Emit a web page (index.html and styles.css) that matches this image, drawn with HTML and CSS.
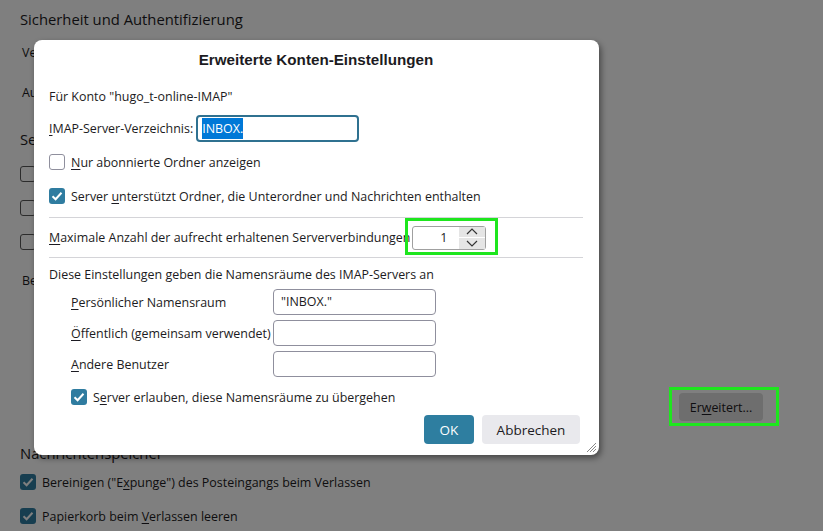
FILE: index.html
```html
<!DOCTYPE html>
<html lang="de">
<head>
    <meta charset="UTF-8">
    <title>Kontoeinstellungen</title>
    <link rel="stylesheet" href="styles.css">
</head>
<body>
    <div class="page">
        <h2 class="section-title first">Sicherheit und Authentifizierung</h2>
        <div class="field-row row-conn">Verbindungssicherheit:</div>
        <div class="field-row row-auth">Authentifizierungsmethode:</div>

        <h2 class="section-title server">Server-Einstellungen</h2>
        <label class="check-row first-check"><span class="box"></span><span>Beim Starten auf neue Nachrichten prüfen</span></label>
        <label class="check-row"><span class="box"></span><span>Alle 10 Minuten auf neue Nachrichten prüfen</span></label>
        <label class="check-row"><span class="box"></span><span>Sofortige Benachrichtigung über neue Nachrichten</span></label>
        <div class="field-row row-delete">Beim Löschen einer Nachricht:</div>

        <div class="advanced-row">
            <button class="btn-plain">Er<u>w</u>eitert...</button>
        </div>

        <h2 class="section-title store">Nachrichtenspeicher</h2>
        <label class="check-row"><span class="box checked"></span><span>Bereinigen ("E<u>x</u>punge") des Posteingangs beim Verlassen</span></label>
        <label class="check-row"><span class="box checked"></span><span>Papierkorb beim <u>V</u>erlassen leeren</span></label>
    </div>

    <div class="dim"></div>
    <div class="mark mark-advanced"></div>

    <div class="dialog">
        <h1 class="dialog-title">Erweiterte Konten-Einstellungen</h1>
        <p class="account">Für Konto "hugo_t-online-IMAP"</p>

        <div class="dir-row">
            <span><u>I</u>MAP-Server-Verzeichnis:</span>
            <div class="text-input focused"><span class="selection">INBOX.</span></div>
        </div>

        <label class="check-row"><span class="box"></span><span><u>N</u>ur abonnierte Ordner anzeigen</span></label>
        <label class="check-row"><span class="box checked"></span><span>Server <u>u</u>nterstützt Ordner, die Unterordner und Nachrichten enthalten</span></label>

        <div class="conn-row">
            <span><u>M</u>aximale Anzahl der aufrecht erhaltenen Serververbindungen</span>
            <div class="spinner">
                <span class="spin-value">1</span>
                <div class="spin-buttons">
                    <span class="spin-btn"><svg width="12" height="7" viewBox="0 0 12 7"><path d="M1 6 L6 1 L11 6" fill="none" stroke="#333" stroke-width="1.2"/></svg></span>
                    <span class="spin-btn"><svg width="12" height="7" viewBox="0 0 12 7"><path d="M1 1 L6 6 L11 1" fill="none" stroke="#333" stroke-width="1.2"/></svg></span>
                </div>
                <div class="mark mark-spinner"></div>
            </div>
        </div>

        <p class="ns-intro">Diese Einstellungen geben die Namensräume des IMAP-Servers an</p>
        <div class="ns-grid">
            <span><u>P</u>ersönlicher Namensraum</span>
            <div class="text-input">"INBOX."</div>
            <span><u>Ö</u>ffentlich (gemeinsam verwendet)</span>
            <div class="text-input"></div>
            <span><u>A</u>ndere Benutzer</span>
            <div class="text-input"></div>
        </div>
        <label class="check-row ns-override"><span class="box checked"></span><span>S<u>e</u>rver erlauben, diese Namensräume zu übergehen</span></label>

        <div class="dialog-buttons">
            <button class="btn-primary">OK</button>
            <button class="btn-secondary">Abbrechen</button>
        </div>

        <svg class="grip" width="12" height="12" viewBox="0 0 12 12">
            <path d="M11 2 L2 11 M11 5 L5 11 M11 8 L8 11" stroke="#888" stroke-width="1"/>
        </svg>
    </div>
</body>
</html>
```

FILE: styles.css
```css
* { box-sizing: border-box; }
html, body { margin: 0; padding: 0; }
body {
    width: 823px;
    height: 531px;
    overflow: hidden;
    background: #fff;
    font-family: "Open Sans", "Noto Sans", sans-serif;
    font-size: 12.45px;
    color: #1c1b22;
    position: relative;
}
u { text-decoration-thickness: 1px; text-underline-offset: 2px; }

/* settings page behind the dialog */
.page {
    padding: 0 0 0 20px;
    display: flex;
    flex-direction: column;
    white-space: nowrap;
}
.section-title {
    font-size: 14.8px;
    font-weight: 400;
    margin: 0;
    height: 24px;
    line-height: 24px;
}
.section-title.first { margin-top: 7px; }
.section-title.server { margin-top: 14px; }
.section-title.store { margin-top: 20px; }
.field-row {
    height: 40px;
    line-height: 40px;
    padding-left: 2px;
}
.row-conn { margin-top: 2px; }
.row-delete { margin-top: 2px; }
.page .check-row { height: 34px; }
.page .first-check { margin-top: 6px; }
.advanced-row {
    display: flex;
    justify-content: flex-end;
    padding-right: 60px;
    margin-top: 92px;
}
.btn-plain {
    width: 84px;
    height: 28px;
    border: none;
    border-radius: 4px;
    background: #dcdcdc;
    font: inherit;
    color: #1c1b22;
}

.check-row {
    display: flex;
    align-items: center;
    gap: 6px;
    white-space: nowrap;
}
.box {
    width: 16px;
    height: 16px;
    border: 1.5px solid #8f8f9d;
    border-radius: 3px;
    flex: none;
    background: #fff;
}
.box.checked {
    border: none;
    background: #2f7ca0 url("data:image/svg+xml,%3Csvg xmlns='http://www.w3.org/2000/svg' viewBox='0 0 16 16'%3E%3Cpath d='M3.5 8.2 L6.6 11.2 L12.5 4.8' fill='none' stroke='white' stroke-width='2'/%3E%3C/svg%3E") center / 16px 16px no-repeat;
}
.page .box { border-color: #595959; }

.dim {
    position: absolute;
    inset: 0;
    background: rgba(0, 0, 0, 0.5);
}
.mark {
    position: absolute;
    border: 3px solid #1ee61e;
}
.mark-advanced {
    left: 669px;
    top: 387px;
    width: 110px;
    height: 39px;
}

/* modal dialog */
.dialog {
    position: absolute;
    left: 34px;
    top: 40px;
    width: 565px;
    height: 415px;
    background: #fff;
    border-radius: 8px;
    box-shadow: 2px 3px 6px rgba(0, 0, 0, 0.45);
    padding: 0 16px 0 15px;
    display: flex;
    flex-direction: column;
    white-space: nowrap;
}
.dialog-title {
    margin: 11px 0 0;
    font-family: "Liberation Sans", Arial, sans-serif;
    font-size: 15.2px;
    font-weight: 700;
    text-align: center;
    line-height: 18px;
}
.account {
    margin: 18px 0 0;
    line-height: 20px;
}
.dir-row {
    display: flex;
    align-items: center;
    gap: 3px;
    margin-top: 8px;
}
.text-input {
    width: 163px;
    height: 26px;
    border: 1px solid #8f8f9d;
    border-radius: 4px;
    padding: 0 7px;
    line-height: 24px;
}
.text-input.focused {
    height: 27px;
    border: 2px solid #2f7190;
    padding: 0 4px;
    line-height: 23px;
}
.selection {
    background: #0078d7;
    color: #fff;
    padding: 2px 0;
}
.dialog > .check-row { height: 34px; }
.dialog .dir-row + .check-row { margin-top: 3px; }

.conn-row {
    display: flex;
    align-items: center;
    gap: 2px;
    border-top: 1px solid #d4d4d8;
    border-bottom: 1px solid #d4d4d8;
    height: 41px;
    margin-top: 4px;
}
.spinner {
    position: relative;
    width: 74px;
    height: 24px;
    border: 1px solid #a0a0a0;
    border-radius: 3px;
    display: flex;
}
.spin-value {
    flex: 1;
    text-align: right;
    padding-right: 12px;
    line-height: 22px;
}
.spin-buttons {
    width: 26px;
    display: flex;
    flex-direction: column;
    gap: 1px;
    background: #fff;
}
.spin-btn {
    flex: 1;
    background: #e5e5e5;
    display: flex;
    align-items: center;
    justify-content: center;
}
.mark-spinner {
    left: -8px;
    top: -9px;
    width: 93px;
    height: 37px;
}

.ns-intro {
    margin: 7px 0 0;
    line-height: 20px;
}
.ns-grid {
    display: grid;
    grid-template-columns: 202px 163px;
    row-gap: 5px;
    align-items: center;
    margin: 4px 0 0 22px;
}
.check-row.ns-override {
    margin-left: 22px;
    height: 32px;
    margin-top: 4px;
}

.dialog-buttons {
    display: flex;
    justify-content: flex-end;
    gap: 8px;
    margin-top: 2px;
    padding-right: 3px;
}
.dialog-buttons button {
    height: 29px;
    border: none;
    border-radius: 4px;
    font: inherit;
    font-size: 13.5px;
}
.btn-primary {
    width: 50px;
    background: #2e7ea0;
    color: #fff;
}
.btn-secondary {
    width: 98px;
    background: #e9e9ed;
    color: #1c1b22;
}
.grip {
    position: absolute;
    right: 2px;
    bottom: 2px;
}
```
